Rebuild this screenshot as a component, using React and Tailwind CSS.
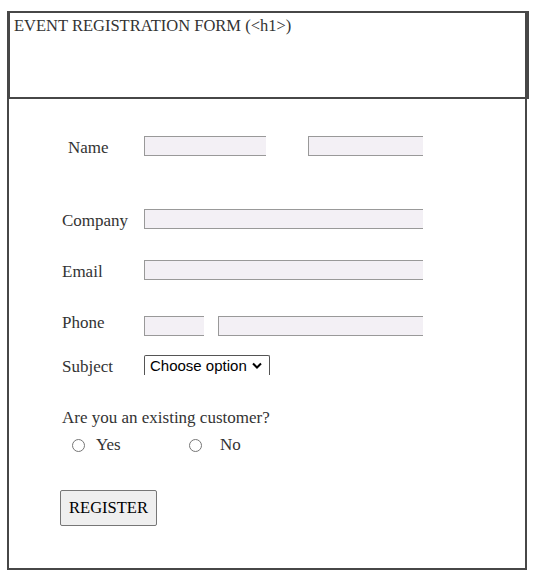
import React from "react";

const serif = "font-['Liberation_Serif',serif]";

function Field({ className }) {
  return <div className={`h-5 bg-[#f3f0f5] border-l border-t border-b border-[#999] ${className}`} />;
}

function Radio({ label, gap, className }) {
  return (
    <label className={`flex items-center ${className}`}>
      <span className="w-[13px] h-[13px] rounded-full border border-[#767676] bg-white" />
      <span className={gap}>{label}</span>
    </label>
  );
}

export default function App() {
  return (
    <div className={`${serif} text-[17px] text-[#333] pt-[11px] pl-[7px]`}>
      <div className="w-[522px] h-[88px] border-t-2 border-b-2 border-l-[3px] border-r-4 border-[#474747] px-1 pt-[3px] leading-[20px] text-[16.5px]">
        EVENT REGISTRATION FORM (&lt;h1&gt;)
      </div>

      <div className="w-[520px] h-[471px] flex flex-col items-start border-l-2 border-r-2 border-b-2 border-[#474747] pl-[53px] leading-[20px]">
        <div className="flex items-center mt-[37px]">
          <span className="w-[82px] pl-[6px] translate-y-[2px]">Name</span>
          <Field className="w-[122px]" />
          <Field className="w-[115px] ml-[42px]" />
        </div>

        <div className="flex items-center mt-[53px]">
          <span className="w-[82px] translate-y-[2px]">Company</span>
          <Field className="w-[279px]" />
        </div>

        <div className="flex items-center mt-[31px]">
          <span className="w-[82px] translate-y-[2px]">Email</span>
          <Field className="w-[279px]" />
        </div>

        <div className="flex items-center mt-[36px]">
          <span className="w-[82px] -translate-y-[3px]">Phone</span>
          <Field className="w-[60px]" />
          <Field className="w-[205px] ml-[14px]" />
        </div>

        <div className="flex items-center mt-[19px]">
          <span className="w-[82px] translate-y-[2px]">Subject</span>
          <div className="w-[126px] h-5 border-l border-t border-r border-[#555] rounded-t-[2px] flex items-center pl-[5px] font-['Liberation_Sans',sans-serif] text-[15px] text-black">
            Choose option
            <svg className="ml-[5px]" width="10" height="7" viewBox="0 0 10 7">
              <path d="M1 1.5 L5 5.5 L9 1.5" fill="none" stroke="#000" strokeWidth="2" />
            </svg>
          </div>
        </div>

        <p className="mt-[34px] leading-[18px]">Are you an existing customer?</p>
        <div className="flex items-center mt-[9px] ml-[10px] leading-[18px]">
          <Radio label="Yes" gap="ml-[11px]" className="w-[117px]" />
          <Radio label="No" gap="ml-[18px]" />
        </div>

        <button className="mt-[36px] -ml-[2px] w-[97px] h-[36px] bg-[#efefef] border border-[#767676] rounded-[2px] text-black text-[16.5px]">
          REGISTER
        </button>
      </div>
    </div>
  );
}
